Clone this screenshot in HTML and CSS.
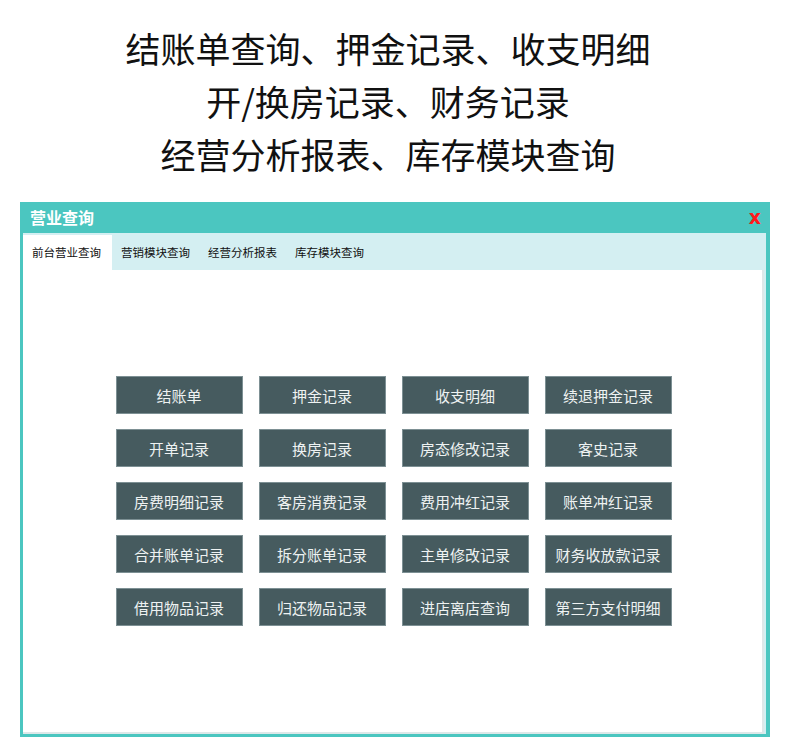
FILE: index.html
```html
<!DOCTYPE html>
<html lang="zh-CN">
<head>
<meta charset="utf-8">
<title>营业查询</title>
<link rel="stylesheet" href="styles.css">
</head>
<body>
<div class="headline">
  <div class="line">结账单查询、押金记录、收支明细</div>
  <div class="line">开/换房记录、财务记录</div>
  <div class="line">经营分析报表、库存模块查询</div>
</div>
<div class="window">
  <div class="titlebar">
    <span class="title">营业查询</span>
    <span class="close">x</span>
  </div>
  <div class="tabs">
    <div class="tab active">前台营业查询</div>
    <div class="tab">营销模块查询</div>
    <div class="tab">经营分析报表</div>
    <div class="tab">库存模块查询</div>
  </div>
  <div class="panel">
    <div class="grid">
      <div class="btn">结账单</div>
      <div class="btn">押金记录</div>
      <div class="btn">收支明细</div>
      <div class="btn">续退押金记录</div>
      <div class="btn">开单记录</div>
      <div class="btn">换房记录</div>
      <div class="btn">房态修改记录</div>
      <div class="btn">客史记录</div>
      <div class="btn">房费明细记录</div>
      <div class="btn">客房消费记录</div>
      <div class="btn">费用冲红记录</div>
      <div class="btn">账单冲红记录</div>
      <div class="btn">合并账单记录</div>
      <div class="btn">拆分账单记录</div>
      <div class="btn">主单修改记录</div>
      <div class="btn">财务收放款记录</div>
      <div class="btn">借用物品记录</div>
      <div class="btn">归还物品记录</div>
      <div class="btn">进店离店查询</div>
      <div class="btn">第三方支付明细</div>
    </div>
  </div>
</div>
</body>
</html>
```
FILE: styles.css
```css
html, body {
  margin: 0;
  padding: 0;
  background: #ffffff;
  font-family: "Noto Sans CJK SC", "Noto Sans", sans-serif;
}
body {
  width: 790px;
  height: 738px;
  overflow: hidden;
}
.headline {
  padding-top: 21px;
  text-align: center;
  color: #111;
  font-size: 35px;
  line-height: 53px;
  height: 202px;
  box-sizing: border-box;
  padding-right: 14px;
}
.window {
  margin-left: 20px;
  width: 750px;
  height: 535px;
  box-sizing: border-box;
  border: 3px solid #4bc6c0;
  border-right-width: 4px;
  border-top: 0;
  background: #d4eff2;
  display: flex;
  flex-direction: column;
}
.titlebar {
  height: 31px;
  margin: 0 -4px 0 -3px;
  padding: 0 9px 0 10px;
  background: #4bc6c0;
  display: flex;
  align-items: center;
  justify-content: space-between;
}
.title {
  color: #ffffff;
  font-size: 16px;
  font-weight: bold;
  line-height: 31px;
}
.close {
  color: #ff1a1a;
  font-family: "DejaVu Sans", sans-serif;
  font-weight: bold;
  font-size: 19px;
  line-height: 20px;
  margin-top: -2px;
}
.tabs {
  height: 37px;
  box-sizing: border-box;
  padding-top: 2px;
  display: flex;
}
.tab {
  padding: 0 9px;
  font-size: 11.5px;
  line-height: 35px;
  color: #111;
}
.tab.active {
  background: #ffffff;
  padding-right: 11px;
}
.panel {
  flex: 1;
  background: #ffffff;
  margin-right: 2px;
  border-right: 2px solid #dde8e9;
  border-bottom: 2px solid #dde8e9;
  display: flex;
  justify-content: center;
  padding-top: 106px;
  padding-left: 2px;
}
.grid {
  display: grid;
  grid-template-columns: repeat(4, 127px);
  grid-auto-rows: 38px;
  column-gap: 16px;
  row-gap: 15px;
  align-content: start;
}
.btn {
  background: #465b5f;
  border: 1px solid #7d9094;
  box-sizing: border-box;
  color: #eef2f2;
  font-size: 15px;
  display: flex;
  align-items: center;
  justify-content: center;
}
```
